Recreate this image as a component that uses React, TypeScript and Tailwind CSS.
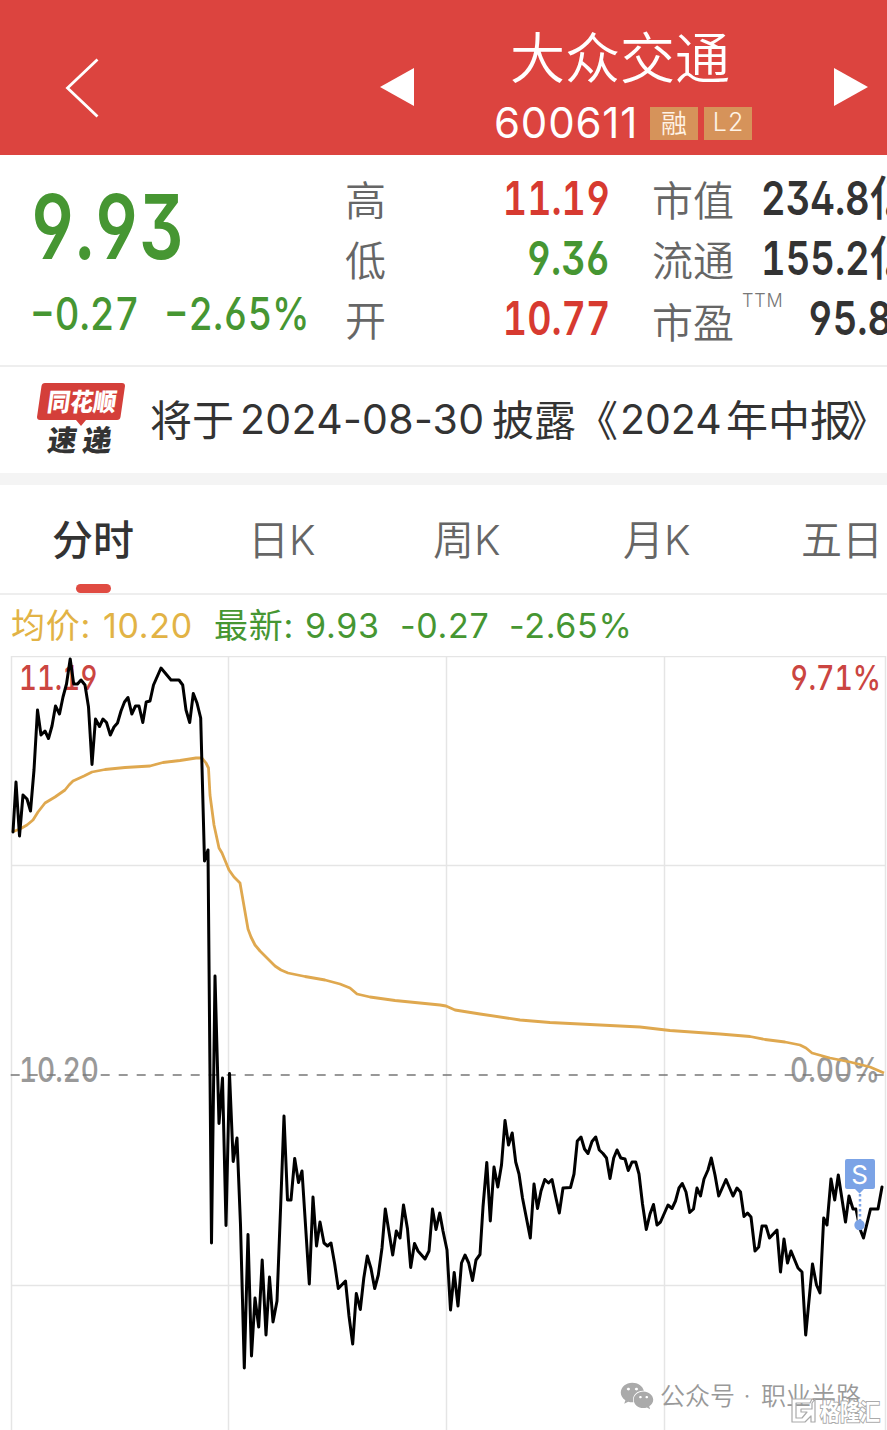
import type { ReactNode } from "react";
import { FaWeixin } from "react-icons/fa";

const PRICE =
  "13,832 16,782 19.5,836 23,795 27,799 30.5,811 34,770 37.5,710 41,735 45,731 48.5,738.5 52,726 55.5,706 59.5,714 63,697 66.5,684 70.2,659 73.7,684 77.5,684 81,680 85,685 88.5,707 92,764.5 95.5,719 99.5,726.5 103,719 106.5,722.5 110.3,735 114,727 117.5,723 121,711 124.5,702 128,697.5 131.8,714 135.5,706 139,706 142.8,722.5 146.2,702 150,701 153.5,685 161,668 171,680 179,680 182.7,685 186,710 189.7,722.5 193.3,693.5 197,703 200.7,718 204.5,861 208,850 211.5,1243 215,976 219,1123.5 222.5,1078 226,1225.5 229.5,1073.5 233.2,1161.5 237,1138 240.5,1225 244.3,1368 248,1234.5 251.5,1356 255,1298 258.7,1327 262.2,1260 266,1335 269.5,1277 273,1322 277,1301 280.5,1210 284,1116 287.5,1200 291,1200 294.7,1158.5 298.5,1182.5 302,1171 305.5,1225 309.3,1284 313,1197 316.5,1246 320,1222 324,1243 327.5,1246 331,1243 334.7,1264 338.3,1288.5 345.5,1281 349,1316 352.7,1344 356.3,1293.5 360.3,1309.5 363.8,1278 367.3,1256 371,1268.5 374.7,1288.5 378.3,1275 382,1248 385.3,1209 392.7,1255 396.3,1231 400,1238 403.5,1205 407.5,1229 410.7,1267.5 414.5,1243.5 418,1251 425,1259 429,1251 432.5,1209 436,1229.5 439.7,1213 443,1231 447,1250 450.5,1310 454.2,1272.5 458,1306 461.5,1263 465,1255 468.7,1263 472.5,1280.5 476,1260 480,1254.5 483,1207 486.8,1162.5 490.3,1221 494,1167 497.8,1187 501.5,1165 505,1120.5 508.5,1145 512.2,1133 515.7,1162 519,1174 522.5,1198 530.3,1238 534,1184 537.5,1208.5 541,1191 544.8,1179.5 548.5,1183 552,1179.5 555.5,1196 559.3,1213 563,1188 570.5,1187.5 574,1174 577.3,1141 581,1137 584.5,1149 588,1153.5 592,1141.5 595.7,1137 599.3,1150 603,1153.5 606.5,1158 610,1178.5 613.7,1158 617,1150 620.8,1158 625,1159 628.3,1170.5 632,1162 635.7,1162 639,1174 642.5,1204 646.3,1229.5 650,1214 653.5,1204.5 657,1225 660.5,1222 668,1205 672,1208.5 675.5,1201 679,1188 682.3,1183.5 686,1192 689.7,1212.5 693.5,1209 697,1188 700.5,1196 704,1179 708,1170 711.3,1158 715,1175 718.7,1196 726,1179.5 733,1196 737,1188 740.5,1192 744,1216.5 747.5,1213 751,1217 755,1251 758.7,1247 762,1226 766,1226 769.5,1238 777,1230 780.5,1272 784,1239 787.5,1263 791,1251 798,1268 802,1272 805.7,1335 812.5,1264 816.5,1285 820,1293 823.7,1218 827,1225 831,1179 834.7,1200 838.3,1175 845.5,1222 849,1196 853,1209 856,1209 860,1229 863.5,1238 870.5,1209 878,1209 882,1187";

const AVERAGE =
  "12,832 20,829 27,825 33,820 38,812 45,803 55,797 65,790 69,785 73,781 84,776 92,772 105,769.5 125,767.5 150,766 163,762.5 180,760.5 196,758 202,758 206,763 208.5,768 210,795 214,825 219,848 222,853 229,870 234,877 240,883 244,906 248,929 251,937 255,945 260,951 265,956 275,966 281,970 288,973 305,976.5 325,980 340,984 350,988 357,994 370,997 395,1000.5 440,1005 446,1006 455,1010 480,1014 520,1020 550,1022.5 600,1025 640,1027 670,1030.5 720,1034 750,1036.5 765,1039.5 785,1042 800,1045 806,1048 812,1053 830,1058 850,1062 870,1067 884,1073";

const CJK = "font-['Inter','Noto_Sans_CJK_SC',sans-serif]";
const DIN = "font-['Inter','Noto_Sans_CJK_SC',sans-serif] [font-feature-settings:'ss01','tnum']";

function Header() {
  return (
    <header className="flex h-[155px] items-start bg-[#dc443f] text-white">
      <svg className="ml-[60px] mt-[54px] h-[68px] w-[44px] shrink-0" viewBox="60 54 44 68" fill="none">
        <path d="M97.5 59.5 67.5 88 97.5 116.5" stroke="currentColor" strokeWidth="2.8" />
      </svg>
      <svg className="ml-[276px] mt-[68px] h-[38px] w-[34px] shrink-0" viewBox="0 0 34 38">
        <path d="M34 0v38L0 19z" fill="currentColor" />
      </svg>
      <div className="ml-[80px] w-[260px] shrink-0 pt-[27px]">
        <h1 className="pl-[16px] text-[55px] font-[350] leading-[62px] whitespace-nowrap">大众交通</h1>
        <div className="mt-[14px] flex h-[40px] items-center">
          <span className="w-[156px] text-[42px] font-[370] leading-[40px] tracking-[0.8px]">600611</span>
          <span className="flex h-[33px] w-[48px] items-center justify-center bg-[#d6935a] text-[26px] font-[350] text-[#fff3e6]">融</span>
          <span className="ml-[6px] flex h-[33px] w-[48px] items-center justify-center bg-[#d6935a] pl-px text-[25px] font-[350] tracking-[1px] text-[#fff3e6]">L2</span>
        </div>
      </div>
      <svg className="ml-[80px] mt-[68px] h-[38px] w-[34px] shrink-0" viewBox="0 0 34 38">
        <path d="M0 0v38l34-19z" fill="currentColor" />
      </svg>
    </header>
  );
}

function Stat({ label, value, tone }: { label: string; value: string; tone: string }) {
  return (
    <div className="flex h-[60px] w-[265px] items-center justify-between">
      <span className="pt-[8px] text-[41px] font-[350] text-[#666]">{label}</span>
      <span className={`${DIN} ${tone} origin-right scale-x-[0.8] text-[47px] font-semibold`}>{value}</span>
    </div>
  );
}

function Market({ label, note, children }: { label: string; note?: string; children: ReactNode }) {
  return (
    <div className="flex h-[60px] w-[235px] items-center whitespace-nowrap">
      <span className={`text-[41px] font-[350] text-[#666] ${note ? "pt-[12px]" : "pt-[8px]"}`}>{label}</span>
      {note && <span className="ml-[8px] -mt-[35px] w-[40px] text-[18px] font-[350] tracking-[0.8px] text-[#777]">{note}</span>}
      {children}
    </div>
  );
}

function Quote() {
  return (
    <section className="flex h-[212px] overflow-hidden border-b-2 border-[#eee] bg-white">
      <div className="w-[345px] shrink-0 pl-[30px] pt-[24px] text-[#469632]">
        <div className={`${DIN} h-[96px] origin-left scale-x-[0.785] text-[89px] font-semibold leading-[96px]`}>9.93</div>
        <div className={`${DIN} mt-[16px] flex h-[46px] items-center text-[45px] font-medium`}>
          <span className="w-[134px] origin-left scale-x-[0.85] whitespace-nowrap">−0.27</span>
          <span className="origin-left scale-x-[0.84] whitespace-nowrap">−2.65%</span>
        </div>
      </div>
      <div className="w-[307px] shrink-0 pt-[13px]">
        <Stat label="高" value="11.19" tone="text-[#d73a30]" />
        <Stat label="低" value="9.36" tone="text-[#469632]" />
        <Stat label="开" value="10.77" tone="text-[#d73a30]" />
      </div>
      <div className="w-[235px] shrink-0 overflow-hidden pt-[13px]">
        <Market label="市值">
          <span className={`${DIN} ml-[27px] origin-left scale-x-[0.81] text-[47px] font-semibold text-[#333]`}>
            234.8<span className="inline-block origin-left scale-x-[1.2] font-medium">亿</span>
          </span>
        </Market>
        <Market label="流通">
          <span className={`${DIN} ml-[27px] origin-left scale-x-[0.81] text-[47px] font-semibold text-[#333]`}>
            155.2<span className="inline-block origin-left scale-x-[1.2] font-medium">亿</span>
          </span>
        </Market>
        <Market label="市盈" note="TTM">
          <span className={`${DIN} ml-[26px] origin-left scale-x-[0.81] text-[47px] font-semibold text-[#333]`}>95.8</span>
        </Market>
      </div>
    </section>
  );
}

function News() {
  return (
    <section className="flex h-[118px] items-center overflow-hidden border-b-[12px] border-[#f4f4f4] bg-white text-[41px] text-[#333]">
      <svg className="ml-[34px] h-[80px] w-[94px] shrink-0" viewBox="34 380 94 80">
        <path d="M45 383h77q3 0 3 3l-4.500 31q-.5 3-3.500 3H86l-5 6-5-6H40q-3 0-3-3l4.500-31q.5-3 3.500-3z" fill="#d43f3a" />
        <g className="font-['Noto_Sans_CJK_SC',sans-serif] font-black" transform="skewX(-8)">
          <text x="104" y="411" fontSize="25" fill="#fff" textLength="69" lengthAdjust="spacingAndGlyphs">同花顺</text>
          <text x="110" y="451" fontSize="29" fill="#333" textLength="64" lengthAdjust="spacing">速递</text>
        </g>
      </svg>
      <div className="ml-[22px] flex whitespace-nowrap">
        <span className="w-[90px] text-[42px]">将于</span>
        <span className="w-[252px] tracking-[0.3px]">2024-08-30</span>
        <span className="w-[84px] text-[42px]">披露</span>
        <span className="w-[44px] text-[42px]">《</span>
        <span className="w-[106px]">2024</span>
        <span className="text-[42px]">年中报<span className="-ml-[6px]">》</span></span>
      </div>
    </section>
  );
}

function Tabs() {
  return (
    <nav className="flex h-[110px] overflow-hidden border-b-2 border-[#eee] bg-white text-[41px] leading-[110px] whitespace-nowrap text-[#666]">
      <div className="relative w-[248px] shrink-0 pl-[52px] font-medium text-[#333]">
        分时
        <span className="absolute bottom-0 left-[76px] h-[9px] w-[35px] rounded-full bg-[#e04b42]" />
      </div>
      <div className="w-[185px] shrink-0 font-[350]">日K</div>
      <div className="w-[190px] shrink-0 font-[350]">周K</div>
      <div className="w-[178px] shrink-0 font-[350]">月K</div>
      <div className="shrink-0 font-[350]">五日</div>
    </nav>
  );
}

function Legend() {
  return (
    <div className="flex h-[61px] items-center bg-white pl-[11px] text-[34px] tracking-[0.7px] whitespace-nowrap text-[#469632]">
      <span className="w-[92px] text-[#e2b345]">均价:</span>
      <span className="w-[111px] text-[#e2b345]">10.20</span>
      <span className="w-[91px]">最新:</span>
      <span className="w-[95px]">9.93</span>
      <span className="w-[109px]">-0.27</span>
      <span>-2.65%</span>
    </div>
  );
}

function Chart() {
  return (
    <div className="relative h-[774px] bg-white">
      <svg className="block h-[774px] w-[887px]" viewBox="0 656 887 774" fill="none">
        <path d="M11 656.500H886M11 865.500H886M11 1285.500H886M11.500 656V1430M228.500 656V1430M446.500 656V1430M664.500 656V1430M885.500 656V1430" stroke="#e5e5e5" strokeWidth="1.5" />
        <g className={DIN} fontSize="34.500" fontWeight="500">
          <text x="19" y="690" fill="#cb4541" textLength="79" lengthAdjust="spacingAndGlyphs">11.19</text>
          <text x="790" y="690" fill="#cb4541" textLength="91" lengthAdjust="spacingAndGlyphs">9.71%</text>
          <text x="19" y="1081.500" fill="#999" textLength="80" lengthAdjust="spacingAndGlyphs">10.20</text>
          <text x="790" y="1081.500" fill="#999" textLength="90" lengthAdjust="spacingAndGlyphs">0.00%</text>
        </g>
        <path d="M10.700 1075H885" stroke="#777" strokeWidth="1.700" strokeDasharray="9 9" />
        <polyline points={AVERAGE} stroke="#dfa84f" strokeWidth="2.800" strokeLinejoin="round" />
        <polyline points={PRICE} stroke="#000" strokeWidth="3" strokeLinejoin="round" strokeLinecap="round" />
        <path d="M860 1192V1222" stroke="#fff" strokeWidth="5" />
        <path d="M860 1194V1222" stroke="#7ba3e6" strokeWidth="2.500" strokeDasharray="2.500 2.500" />
        <path d="M847 1159h26q2 0 2 2v26q0 2-2 2h-9l-4.500 4.500-4.500-4.500h-8q-2 0-2-2v-26q0-2 2-2z" fill="#7ba3e6" />
        <circle cx="859.500" cy="1225" r="5.200" fill="#7ba3e6" />
        <text x="859.500" y="1183.500" fontSize="26" fill="#fff" textAnchor="middle" className="font-['Inter',sans-serif]">S</text>
      </svg>
      <div className="absolute left-[620px] top-[723px] flex items-center text-[25px] font-[350] leading-[34px] whitespace-nowrap text-[#999]">
        <FaWeixin className="h-[34px] w-[34px] text-[#aaa]" />
        <span className="ml-[6px] w-[76px]">公众号</span>
        <span className="w-[25px] pr-[3px] text-center">·</span>
        <span>职业半路</span>
      </div>
      <svg className="absolute left-[788px] top-[740px] h-[32px] w-[96px]" viewBox="788 1396 96 32" fill="none">
        <path d="M812 1399H792V1422H805L811 1416V1422H815V1399L812 1403V1409H801V1412H807L802 1418H796V1403H810z" fill="#fff" stroke="#aaa" strokeWidth="1.2" strokeLinejoin="round" />
        <text x="820" y="1420" fontSize="23" fill="#fff" stroke="#aaa" strokeWidth="2" paintOrder="stroke" textLength="60" lengthAdjust="spacingAndGlyphs" className="font-['Noto_Sans_CJK_SC',sans-serif] font-bold">格隆汇</text>
      </svg>
    </div>
  );
}

export default function App() {
  return (
    <main className={`${CJK} h-[1430px] w-[887px] overflow-hidden bg-white`}>
      <Header />
      <Quote />
      <News />
      <Tabs />
      <Legend />
      <Chart />
    </main>
  );
}
